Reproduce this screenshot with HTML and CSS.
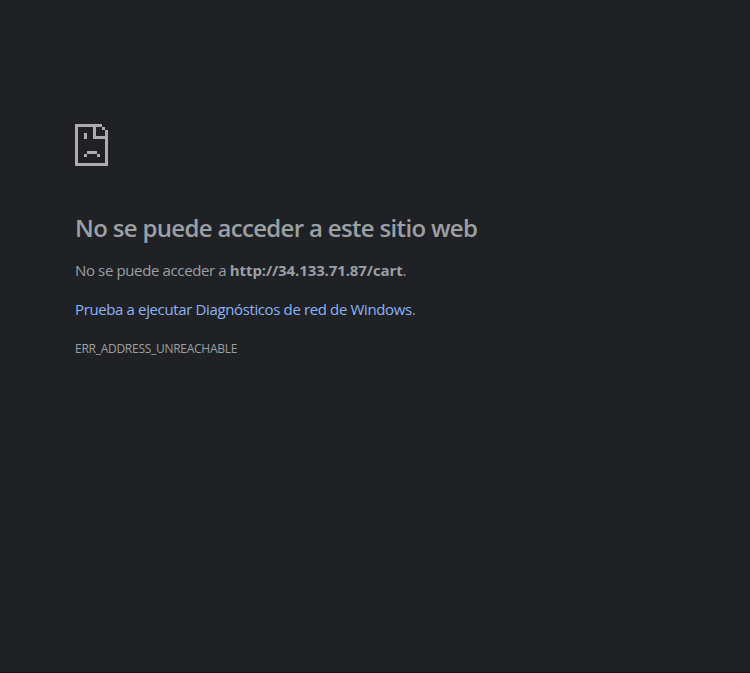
FILE: index.html
```
<!DOCTYPE html>
<html lang="es">
<head>
<meta charset="utf-8">
<title>34.133.71.87</title>
<link rel="stylesheet" href="styles.css">
</head>
<body>
<main class="error-page">
  <svg class="sad-page" viewBox="0 0 33 42" shape-rendering="crispEdges" aria-hidden="true">
    <path d="M0 0h27v3h3v3h3v36H0zM3 3v36h27V15H18V3zM21 3v9h9V6H27V3zM9 9h3v6H9zM12 27h10v3H12zM9 30h3v3H9zM22 30h3v3h-3z" fill-rule="evenodd"/>
  </svg>
  <h1>No se puede acceder a este sitio web</h1>
  <p>No se puede acceder a <strong>http://34.133.71.87/cart</strong>.</p>
  <p><a>Prueba a ejecutar Diagnósticos de red de Windows</a>.</p>
  <div class="code">ERR_ADDRESS_UNREACHABLE</div>
</main>
</body>
</html>
```
FILE: styles.css
```
html, body {
  margin: 0;
  height: 100%;
}

body {
  box-sizing: border-box;
  background: #202124;
  border-bottom: 1px solid #131416;
  color: #9aa0a6;
  font-family: "Segoe UI", "Open Sans", "Noto Sans", sans-serif;
  font-size: 15px;
  overflow: hidden;
}

.error-page {
  padding: 124px 75px 0;
  white-space: nowrap;
}

.sad-page {
  display: block;
  width: 33px;
  height: 42px;
  fill: #acacac;
}

h1 {
  margin: 44px 0 0;
  font-size: 24px;
  font-weight: 600;
  line-height: 36px;
  letter-spacing: -0.67px;
}

p {
  margin: 0;
  line-height: 24px;
  letter-spacing: -0.37px;
}

h1 + p {
  margin-top: 12px;
}

p + p {
  margin-top: 15px;
}

strong {
  font-weight: 700;
  letter-spacing: -0.11px;
}

a {
  color: #8ab4f8;
}

.code {
  margin-top: 18px;
  font-size: 12px;
  line-height: 20px;
  letter-spacing: -0.27px;
}
```
